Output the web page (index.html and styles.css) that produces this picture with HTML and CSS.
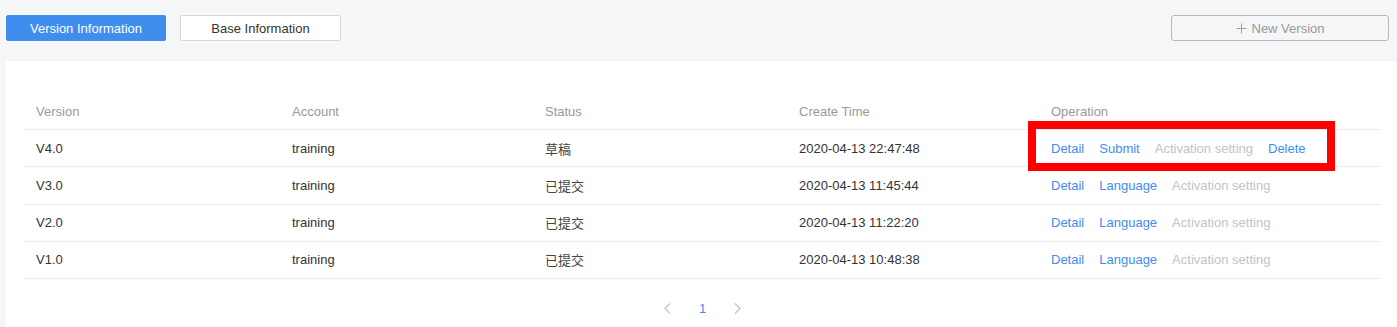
FILE: index.html
```html
<!DOCTYPE html>
<html lang="en">
<head>
<meta charset="utf-8">
<link rel="stylesheet" href="styles.css">
</head>
<body>
<div class="topbar">
  <div class="tabs">
    <button class="btn btn-primary">Version Information</button>
    <button class="btn btn-default">Base Information</button>
  </div>
  <button class="btn btn-new"><svg class="plus" width="11" height="11" viewBox="0 0 11 11"><path d="M5.5 0.5v10M0.5 5.5h10" stroke="#a0a0a0" stroke-width="1" fill="none"/></svg>New Version</button>
</div>
<div class="card">
  <div class="table">
    <div class="row head">
      <div class="cell">Version</div>
      <div class="cell">Account</div>
      <div class="cell">Status</div>
      <div class="cell">Create Time</div>
      <div class="cell">Operation</div>
    </div>
    <div class="row">
      <div class="cell">V4.0</div>
      <div class="cell">training</div>
      <div class="cell cjk" lang="zh-CN">草稿</div>
      <div class="cell">2020-04-13 22:47:48</div>
      <div class="cell ops"><span class="link">Detail</span><span class="link">Submit</span><span class="disabled">Activation setting</span><span class="link">Delete</span><div class="highlight"></div></div>
    </div>
    <div class="row">
      <div class="cell">V3.0</div>
      <div class="cell">training</div>
      <div class="cell cjk" lang="zh-CN">已提交</div>
      <div class="cell">2020-04-13 11:45:44</div>
      <div class="cell ops"><span class="link">Detail</span><span class="link">Language</span><span class="disabled">Activation setting</span></div>
    </div>
    <div class="row">
      <div class="cell">V2.0</div>
      <div class="cell">training</div>
      <div class="cell cjk" lang="zh-CN">已提交</div>
      <div class="cell">2020-04-13 11:22:20</div>
      <div class="cell ops"><span class="link">Detail</span><span class="link">Language</span><span class="disabled">Activation setting</span></div>
    </div>
    <div class="row">
      <div class="cell">V1.0</div>
      <div class="cell">training</div>
      <div class="cell cjk" lang="zh-CN">已提交</div>
      <div class="cell">2020-04-13 10:48:38</div>
      <div class="cell ops"><span class="link">Detail</span><span class="link">Language</span><span class="disabled">Activation setting</span></div>
    </div>
  </div>
  <div class="pager">
    <span class="pg"><svg width="7" height="11" viewBox="0 0 7 11"><path d="M6 0.5L1 5.5L6 10.5" stroke="#c0c4cc" stroke-width="1.3" fill="none"/></svg></span>
    <span class="pg active">1</span>
    <span class="pg"><svg width="7" height="11" viewBox="0 0 7 11"><path d="M1 0.5L6 5.5L1 10.5" stroke="#c0c4cc" stroke-width="1.3" fill="none"/></svg></span>
  </div>
</div>
</body>
</html>
```
FILE: styles.css
```css
* { box-sizing: border-box; }
html, body { margin: 0; padding: 0; }
body {
  background: #f5f6f8;
  font-family: "Liberation Sans", Arial, "Noto Sans CJK SC", sans-serif;
  font-size: 13px;
  color: #333;
  overflow: hidden;
  height: 327px;
}
.topbar {
  display: flex;
  justify-content: space-between;
  align-items: center;
  padding: 15px 8px 0 6px;
}
.tabs { display: flex; gap: 14px; }
.btn {
  height: 26px;
  border-radius: 2px;
  font-family: inherit;
  font-size: 13px;
  padding: 0;
  display: flex;
  align-items: center;
  justify-content: center;
}
.btn-primary {
  width: 160px;
  background: #3f8ded;
  border: 1px solid #3f8ded;
  color: #fff;
}
.btn-default {
  width: 161px;
  background: #fff;
  border: 1px solid #d6d6d6;
  color: #333;
}
.btn-new {
  width: 218px;
  background: transparent;
  border: 1px solid #b8b8b8;
  border-radius: 3px;
  color: #999;
  gap: 5px;
}
.card {
  background: #fff;
  margin: 20px 0 0 6px;
  padding: 32px 16px 0 18px;
  height: 266px;
}
.row {
  display: grid;
  grid-template-columns: 256px 253px 254px 252px 1fr;
  height: 37.25px;
  border-bottom: 1px solid #ebebeb;
  align-items: center;
}
.row.head { color: #999; height: 37px; }
.cell { padding-left: 12px; white-space: nowrap; }
.cjk { font-family: "Noto Sans CJK SC", sans-serif; color: #444; font-size: 13px; }
.ops { display: flex; gap: 15px; position: relative; height: 100%; align-items: center; }
.link { color: #3f8ded; }
.disabled { color: #c0c4cc; }
.highlight {
  position: absolute;
  left: -11px;
  top: -9px;
  width: 307px;
  height: 50px;
  border: 8px solid #ff0000;
}
.pager {
  display: flex;
  justify-content: center;
  align-items: center;
  gap: 3px;
  height: 58px;
}
.pg {
  width: 32px;
  height: 28px;
  display: flex;
  align-items: center;
  justify-content: center;
  color: #999;
}
.pg.active { color: #3f8ded; }
```
